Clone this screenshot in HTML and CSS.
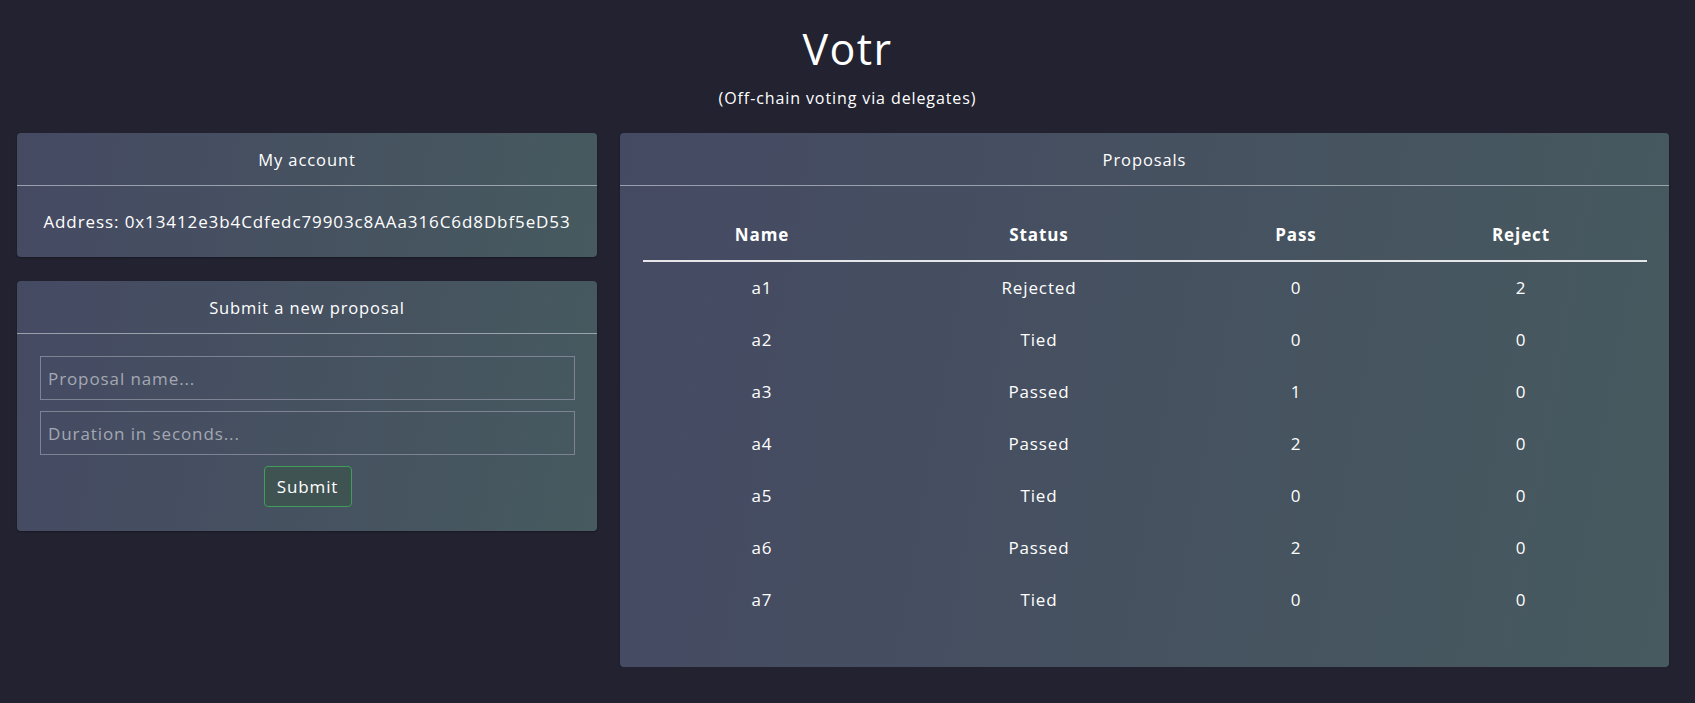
FILE: index.html
```html
<!DOCTYPE html>
<html lang="en">
<head>
<meta charset="utf-8">
<title>Votr</title>
<link rel="stylesheet" href="styles.css">
</head>
<body>
<header class="page-header">
  <h1 class="title">Votr</h1>
  <p class="subtitle">(Off-chain voting via delegates)</p>
</header>
<main class="layout">
  <div class="side">
    <section class="card">
      <div class="card-header">My account</div>
      <div class="card-body account-body">Address: 0x13412e3b4Cdfedc79903c8AAa316C6d8Dbf5eD53</div>
    </section>
    <section class="card">
      <div class="card-header">Submit a new proposal</div>
      <form class="card-body proposal-form">
        <input class="field" type="text" placeholder="Proposal name...">
        <input class="field" type="text" placeholder="Duration in seconds...">
        <button class="submit-btn" type="button">Submit</button>
      </form>
    </section>
  </div>
  <section class="card proposals">
    <div class="card-header">Proposals</div>
    <div class="card-body table-body">
      <table class="prop-table">
        <colgroup>
          <col class="c-name"><col class="c-status"><col class="c-pass"><col class="c-reject">
        </colgroup>
        <thead>
          <tr><th>Name</th><th>Status</th><th>Pass</th><th>Reject</th></tr>
        </thead>
        <tbody>
          <tr><td>a1</td><td>Rejected</td><td>0</td><td>2</td></tr>
          <tr><td>a2</td><td>Tied</td><td>0</td><td>0</td></tr>
          <tr><td>a3</td><td>Passed</td><td>1</td><td>0</td></tr>
          <tr><td>a4</td><td>Passed</td><td>2</td><td>0</td></tr>
          <tr><td>a5</td><td>Tied</td><td>0</td><td>0</td></tr>
          <tr><td>a6</td><td>Passed</td><td>2</td><td>0</td></tr>
          <tr><td>a7</td><td>Tied</td><td>0</td><td>0</td></tr>
        </tbody>
      </table>
    </div>
  </section>
</main>
</body>
</html>
```

FILE: styles.css
```css
* { box-sizing: border-box; }

html, body {
  margin: 0;
  padding: 0;
  background: #222230;
  color: #ffffff;
  font-family: "Open Sans", "Noto Sans", "Liberation Sans", sans-serif;
  letter-spacing: 0.9px;
}

.page-header {
  text-align: center;
  padding-top: 19px;
}

.title {
  margin: 0;
  font-size: 43px;
  font-weight: 400;
  line-height: 60px;
  letter-spacing: 1.4px;
}

.subtitle {
  margin: 7px 0 0 0;
  font-size: 16px;
  line-height: 24px;
}

.layout {
  display: grid;
  grid-template-columns: 580px 1049px;
  column-gap: 23px;
  padding: 0 26px 0 17px;
  margin-top: 23px;
  align-items: start;
}

.side {
  display: flex;
  flex-direction: column;
  gap: 24px;
}

.card {
  border-radius: 4px;
  background: linear-gradient(100deg, #454a63 0%, #465260 55%, #465a5f 100%);
  box-shadow: 0 1px 2px rgba(0, 0, 0, 0.25);
}

.card-header {
  height: 53px;
  display: flex;
  align-items: center;
  justify-content: center;
  font-size: 16.5px;
  border-bottom: 1px solid rgba(200, 205, 212, 0.65);
}

.account-body {
  height: 71px;
  display: flex;
  align-items: center;
  justify-content: center;
  font-size: 17px;
}

.proposal-form {
  margin: 0;
  padding: 22px 22px 24px 23px;
  display: flex;
  flex-direction: column;
  align-items: center;
  gap: 11px;
}

.field {
  width: 100%;
  height: 44px;
  background: transparent;
  border: 1px solid #7d8393;
  border-radius: 0;
  padding: 0 7px;
  color: #ffffff;
  font-family: inherit;
  font-size: 17px;
  letter-spacing: 0.9px;
  outline: none;
}

.field::placeholder {
  color: #a4a8b2;
}

.submit-btn {
  width: 88px;
  height: 41px;
  background: #3f5452;
  border: 1px solid #3e9f5a;
  border-radius: 4px;
  color: #ffffff;
  font-family: inherit;
  font-size: 17px;
  letter-spacing: 0.9px;
  padding: 0;
}

.table-body {
  padding: 22px 22px 0 23px;
}

.prop-table {
  width: 100%;
  border-collapse: collapse;
  table-layout: fixed;
  margin-bottom: 42px;
}

.c-name { width: 238px; }
.c-status { width: 316px; }
.c-pass { width: 198px; }
.c-reject { width: auto; }

.prop-table th {
  height: 53px;
  font-size: 17px;
  font-weight: 700;
  text-align: center;
  border-bottom: 2px solid #e4e6ea;
  padding: 0;
}

.prop-table td {
  height: 52px;
  font-size: 17px;
  text-align: center;
  padding: 0;
}
```
